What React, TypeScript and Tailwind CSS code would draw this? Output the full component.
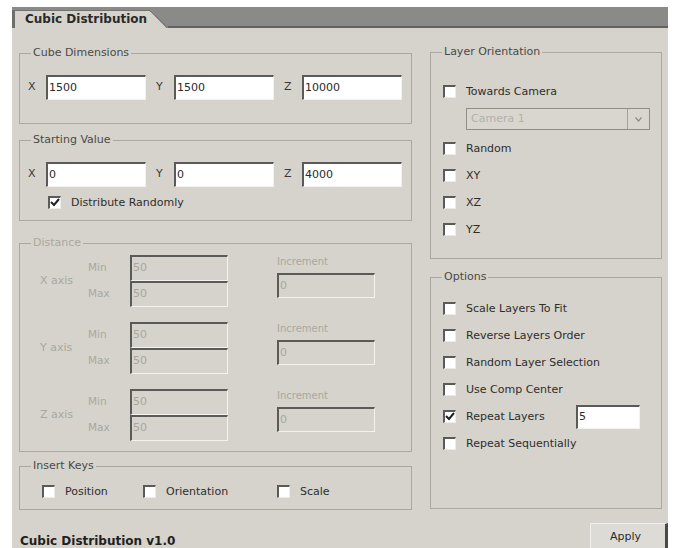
import type { ReactNode } from 'react';

const PANEL = 'bg-[#d5d3cb]';

function Group({
  title,
  disabled,
  className = '',
  children,
}: {
  title: string;
  disabled?: boolean;
  className?: string;
  children: ReactNode;
}) {
  return (
    <fieldset className={`border border-[#aaa8a1] ${className}`}>
      <legend
        className={`ml-[11px] px-[2px] text-[11px] leading-[12px] ${
          disabled ? 'text-[#aaa8a1]' : 'text-[#4a4a48]'
        }`}
      >
        {title}
      </legend>
      {children}
    </fieldset>
  );
}

function Field({
  value,
  className = '',
  disabled,
}: {
  value: string;
  className?: string;
  disabled?: boolean;
}) {
  return (
    <div
      className={`flex items-center border-t-2 border-l-2 border-b border-r border-t-[#5a5a58] border-l-[#5a5a58] border-b-[#f3f2ee] border-r-[#f3f2ee] pl-[1px] text-[11px] ${
        disabled ? 'bg-[#d5d3cb] text-[#a9a7a0]' : 'bg-white text-[#2a2a2a]'
      } ${className}`}
    >
      {value}
    </div>
  );
}

function Check({
  label,
  checked,
  className = '',
}: {
  label: string;
  checked?: boolean;
  className?: string;
}) {
  return (
    <div className={`flex items-center h-[13px] ${className}`}>
      <span className="relative w-[13px] h-[13px] shrink-0 bg-white border-t-2 border-l-2 border-b border-r border-t-[#5a5a58] border-l-[#5a5a58] border-b-[#ecebe6] border-r-[#ecebe6]">
        {checked && (
          <svg className="absolute left-0 top-0" width="10" height="10" viewBox="0 0 10 10">
            <path d="M1 4 L4 7 L9 1" fill="none" stroke="#1f1f1f" strokeWidth="2" />
          </svg>
        )}
      </span>
      <span className="ml-[10px] text-[11px] leading-[13px] text-[#2e2e2c] whitespace-nowrap">{label}</span>
    </div>
  );
}

function AxisBlock({ axis }: { axis: string }) {
  return (
    <div className="flex">
      <div className="w-[48px] flex items-center text-[11px] text-[#aaa8a1]">{axis} axis</div>
      <div className="flex flex-col">
        <div className="flex items-center">
          <span className="w-[42px] text-[10.5px] text-[#aaa8a1]">Min</span>
          <Field value="50" disabled className="w-[98px] h-[26px]" />
        </div>
        <div className="flex items-center">
          <span className="w-[42px] text-[10.5px] text-[#aaa8a1]">Max</span>
          <Field value="50" disabled className="w-[98px] h-[26px]" />
        </div>
      </div>
      <div className="ml-[49px] flex flex-col">
        <span className="mt-[1px] h-[12px] text-[10px] leading-[12px] text-[#aaa8a1]">Increment</span>
        <Field value="0" disabled className="mt-[5px] w-[98px] h-[25px]" />
      </div>
    </div>
  );
}

export default function App() {
  return (
    <div className="w-[675px] h-[548px] bg-white overflow-hidden pl-[12px] pt-[7px] font-['DejaVu_Sans',sans-serif]">
      <div className={`w-[656px] h-[541px] ${PANEL} flex flex-col`}>
        {/* tab strip */}
        <div className="flex h-[21px] shrink-0 bg-[#8a8a89]">
          <div className="flex items-end">
            <div className="h-[18px] pl-[10px] pr-[3px] bg-[#d5d3cb] border-l-[3px] border-t border-l-[#6e6e6c] border-t-[#727270] text-[12px] font-bold leading-[17px] text-[#2a2a2a] whitespace-nowrap">
              Cubic Distribution
            </div>
            <svg width="18" height="18" viewBox="0 0 18 18" className="block">
              <polygon points="0,0 0.5,0 18,18 0,18" fill="#d5d3cb" />
              <line x1="0" y1="0.5" x2="17.5" y2="18" stroke="#6e6e6c" strokeWidth="1.2" />
            </svg>
          </div>
          <div className="flex-1 border-b-2 border-b-[#626260]" />
        </div>

        <div className="flex pl-[7px]">
          {/* left column */}
          <div className="w-[393px] flex flex-col">
            <Group title="Cube Dimensions" className="mt-[19px] h-[77px]">
              <div className="flex items-center pt-[16px] pl-[8px] gap-[10px]">
                {['X', 'Y', 'Z'].map((a, i) => (
                  <div key={a} className="flex items-center">
                    <span className="w-[18px] text-[11px] text-[#3a3a38]">{a}</span>
                    <Field value={i === 2 ? '10000' : '1500'} className="w-[100px] h-[25px]" />
                  </div>
                ))}
              </div>
            </Group>

            <Group title="Starting Value" className="mt-[10px] h-[87px]">
              <div className="flex items-center pt-[16px] pl-[8px] gap-[10px]">
                {['X', 'Y', 'Z'].map((a, i) => (
                  <div key={a} className="flex items-center">
                    <span className="w-[18px] text-[11px] text-[#3a3a38]">{a}</span>
                    <Field value={i === 2 ? '4000' : '0'} className="w-[100px] h-[25px]" />
                  </div>
                ))}
              </div>
              <Check label="Distribute Randomly" checked className="mt-[9px] ml-[28px]" />
            </Group>

            <Group title="Distance" disabled className="mt-[16px] h-[215px]">
              <div className="flex flex-col gap-[15px] pt-[6px] pl-[20px]">
                <AxisBlock axis="X" />
                <AxisBlock axis="Y" />
                <AxisBlock axis="Z" />
              </div>
            </Group>

            <Group title="Insert Keys" className="mt-[8px] h-[50px]">
              <div className="flex pt-[13px] pl-[22px]">
                <Check label="Position" className="w-[101px]" />
                <Check label="Orientation" className="w-[134px]" />
                <Check label="Scale" />
              </div>
            </Group>
          </div>

          {/* right column */}
          <div className="ml-[18px] w-[232px] flex flex-col">
            <Group title="Layer Orientation" className="mt-[18px] h-[213px]">
              <div className="flex flex-col pt-[27px] pl-[12px]">
                <Check label="Towards Camera" />
                <div className="mt-[10px] ml-[23px] w-[184px] h-[22px] flex border border-[#8f8d87] bg-[#d8d6cf]">
                  <span className="flex-1 pl-[4px] text-[11px] leading-[20px] text-[#b3b1aa]">Camera 1</span>
                  <span className="w-[22px] flex items-center justify-center border-l border-[#a3a19b]">
                    <svg width="7" height="5" viewBox="0 0 7 5">
                      <path d="M0.5 0.5 L3.5 4 L6.5 0.5" fill="none" stroke="#8f8d87" strokeWidth="1.2" />
                    </svg>
                  </span>
                </div>
                <div className="mt-[12px] flex flex-col gap-[14px]">
                  <Check label="Random" />
                  <Check label="XY" />
                  <Check label="XZ" />
                  <Check label="YZ" />
                </div>
              </div>
            </Group>

            <Group title="Options" className="mt-[12px] h-[238px]">
              <div className="flex flex-col gap-[14px] pt-[19px] pl-[12px]">
                <Check label="Scale Layers To Fit" />
                <Check label="Reverse Layers Order" />
                <Check label="Random Layer Selection" />
                <Check label="Use Comp Center" />
                <div className="flex items-center h-[13px]">
                  <Check label="Repeat Layers" checked className="w-[133px]" />
                  <Field value="5" className="w-[64px] h-[24px]" />
                </div>
                <Check label="Repeat Sequentially" />
              </div>
            </Group>
          </div>
        </div>

        {/* footer */}
        <div className="flex items-start">
          <span className="mt-[24px] ml-[8px] text-[12px] font-bold leading-[14px] text-[#1f1f1f] whitespace-nowrap">
            Cubic Distribution v1.0
          </span>
          <button className="ml-auto mt-[13px] w-[78px] h-[27px] bg-[#dddbd5] border-t border-l border-t-[#f0efeb] border-l-[#f0efeb] border-r-[3px] border-r-[#4a4a48] pr-[5px] text-[11px] text-[#2a2a2a]">
            Apply
          </button>
        </div>
      </div>
    </div>
  );
}
